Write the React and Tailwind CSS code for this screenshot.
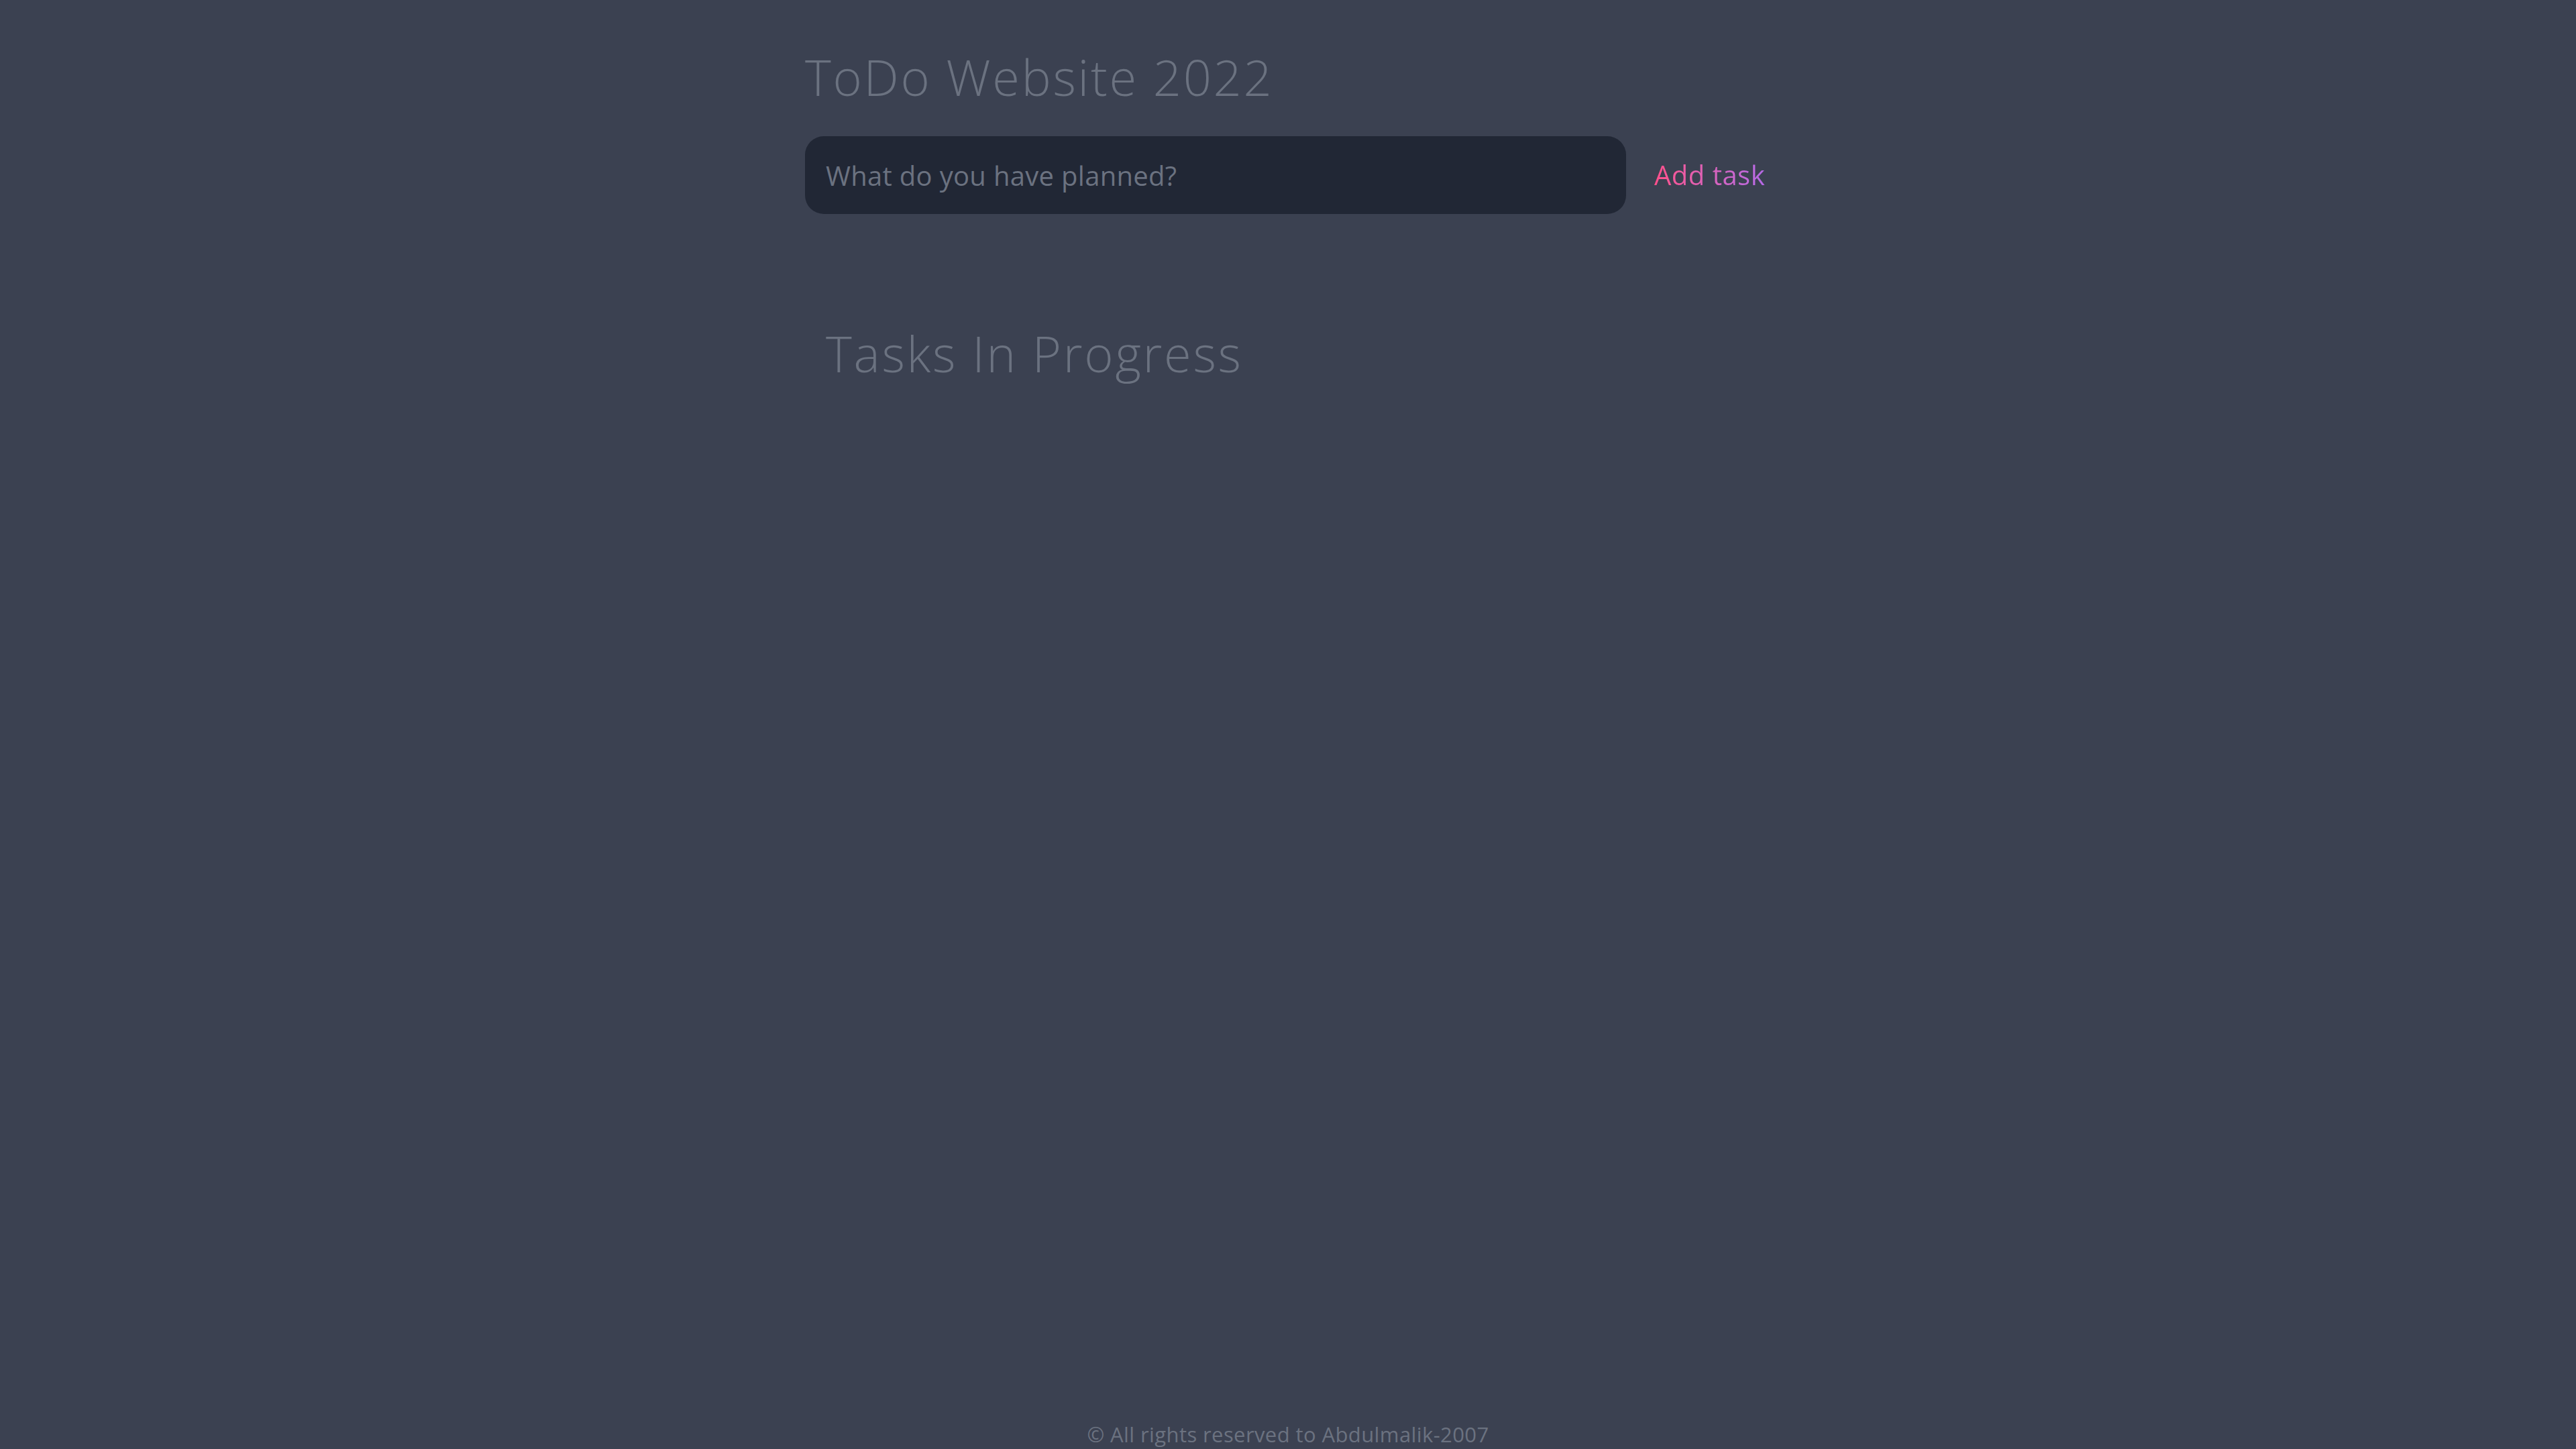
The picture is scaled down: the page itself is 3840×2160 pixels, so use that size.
export default function App() {
  return (
    <div
      className="min-h-screen bg-[#3b4151] flex flex-col"
      style={{ fontFamily: '"Open Sans", "Liberation Sans", sans-serif' }}
    >
      <main className="flex-1 w-[1440px] mx-auto pt-[78px]">
        <h1 className="text-[74px] leading-none font-light tracking-[2.7px] text-[#6b7280]">ToDo Website 2022</h1>

        <form className="mt-[51px] flex items-center gap-[42px]" onSubmit={(e) => e.preventDefault()}>
          <input
            className="w-[1224px] h-[116px] rounded-[28px] bg-[#212735] px-[31px] text-[40px] tracking-[0.3px] text-gray-300 placeholder:text-[#6b7280] outline-none"
            placeholder="What do you have planned?"
          />
          <button
            type="submit"
            className="text-[40px] tracking-[0.5px] bg-gradient-to-r from-[#ff4f8b] to-[#b469e6] bg-clip-text text-transparent"
          >
            Add task
          </button>
        </form>

        <section className="mt-[171px] px-[31px]">
          <h2 className="text-[74px] leading-none font-light tracking-[2.7px] text-[#6b7280]">Tasks In Progress</h2>
          <ul className="mt-8"></ul>
        </section>
      </main>

      <footer className="text-center text-[31px] leading-none tracking-[0.4px] text-[#6b7280] pb-[6px]">
        © All rights reserved to Abdulmalik-2007
      </footer>
    </div>
  );
}
